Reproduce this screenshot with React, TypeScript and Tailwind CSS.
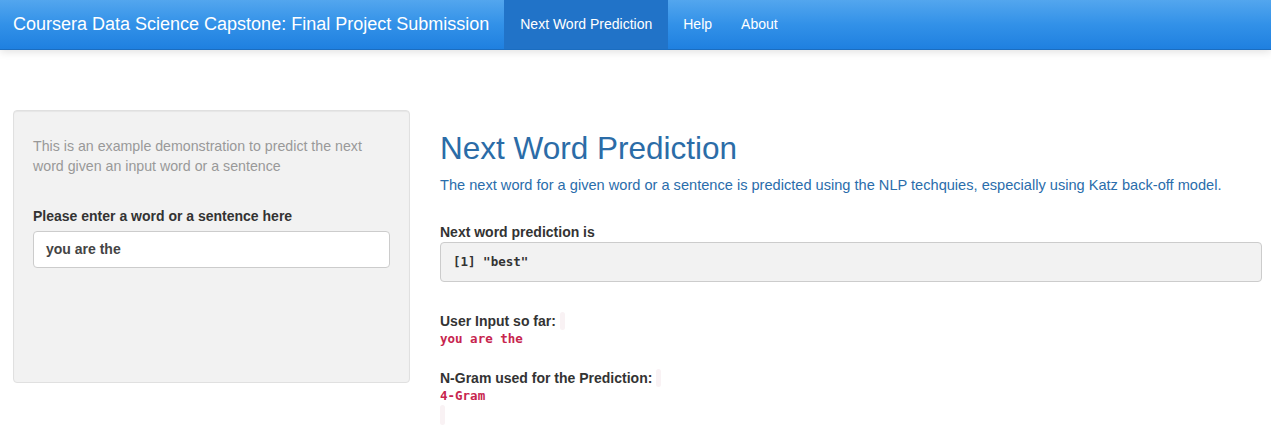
import React from "react";

export default function App() {
  return (
    <div className="min-h-[433px] bg-white font-['Liberation_Sans',Arial,sans-serif] text-[14px] text-[#333]">
      <nav className="flex h-[50px] items-stretch border-b border-[#1b6dc0] bg-[linear-gradient(#53a6ee,#3291e8_50%,#1f80e0)] shadow-[0_2px_8px_rgba(0,0,0,0.12)]">
        <div className="flex items-center pl-[13px] pr-[15px] text-[18px] text-white">
          Coursera Data Science Capstone: Final Project Submission
        </div>
        <div className="flex items-center bg-[#2173c8] px-[16px] text-white">Next Word Prediction</div>
        <div className="flex items-center px-[15px] text-white">Help</div>
        <div className="flex items-center px-[14px] text-white">About</div>
      </nav>

      <div className="flex pt-[60px] pl-[13px] pr-[9px]">
        <div className="h-[273px] w-[397px] shrink-0 rounded-[4px] border border-[#e0e0e0] bg-[#f2f2f2] px-[19px] pt-[25px] shadow-[inset_0_1px_1px_rgba(0,0,0,0.05)]">
          <p className="mb-[10px] text-[14.2px] leading-[20px] text-[#999]">
            This is an example demonstration to predict the next word given an input word or a sentence
          </p>
          <div className="mt-[30px] mb-[5px] text-[14px] font-bold leading-[20px] text-[#333]">
            Please enter a word or a sentence here
          </div>
          <div className="flex h-[37px] items-center rounded-[4px] border border-[#ccc] bg-white px-[12px] text-[14px] font-bold text-[#444]">
            you are the
          </div>
        </div>

        <div className="ml-[30px] flex-1">
          <h2 className="mt-[20px] text-[31.5px] leading-[36px] text-[#2b6ca7]">Next Word Prediction</h2>
          <h5 className="mt-[10px] text-[14.6px] leading-[18px] text-[#2a6dab]">
            The next word for a given word or a sentence is predicted using the NLP techquies, especially using Katz back-off model.
          </h5>
          <div className="mt-[28px] text-[14px] font-bold leading-[20px] text-[#333]">Next word prediction is</div>
          <pre className="flex h-[40px] items-center rounded-[4px] border border-[#ccc] bg-[#f2f2f2] px-[12px] font-['DejaVu_Sans_Mono',monospace] text-[12.5px] font-bold text-[#333]">
            [1] "best"
          </pre>
          <div className="mt-[29px] flex items-center text-[14px] font-bold leading-[20px] text-[#333]">
            User Input so far:
            <span className="ml-[4px] inline-block h-[18px] w-[5px] rounded-[3px] bg-[#f9f2f4]"></span>
          </div>
          <div className="font-['DejaVu_Sans_Mono',monospace] text-[12.5px] font-bold leading-[16px] text-[#c7254e]">you are the</div>
          <div className="mt-[21px] flex items-center text-[14px] font-bold leading-[20px] text-[#333]">
            N-Gram used for the Prediction:
            <span className="ml-[4px] inline-block h-[18px] w-[5px] rounded-[3px] bg-[#f9f2f4]"></span>
          </div>
          <div className="font-['DejaVu_Sans_Mono',monospace] text-[12.5px] font-bold leading-[16px] text-[#c7254e]">4-Gram</div>
          <div className="mt-[1px] h-[20px] w-[5px] rounded-[3px] bg-[#f9f2f4]"></div>
        </div>
      </div>
    </div>
  );
}
